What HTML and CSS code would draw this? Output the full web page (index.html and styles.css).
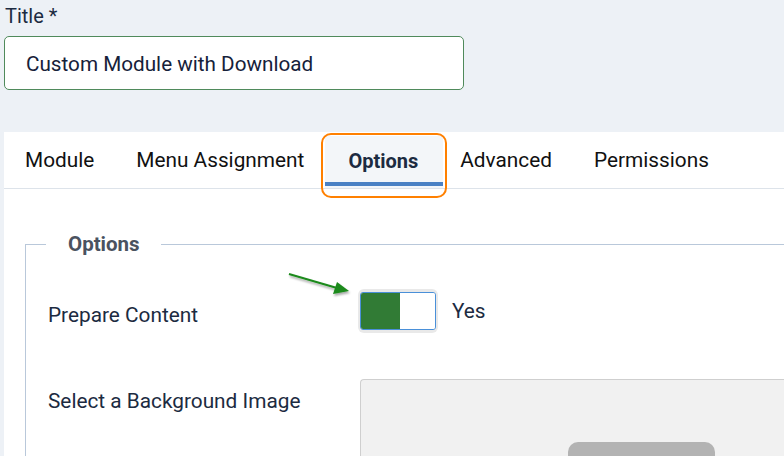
FILE: index.html
```html
<!DOCTYPE html>
<html>
<head>
<meta charset="utf-8">
<link rel="stylesheet" href="styles.css">
</head>
<body>
<div class="page">
  <div class="title-label">Title *</div>
  <div class="title-input">Custom Module with Download</div>
  <div class="panel">
    <div class="tabs">
      <div class="tab">Module</div>
      <div class="tab">Menu Assignment</div>
      <div class="tab active">Options</div>
      <div class="tab">Advanced</div>
      <div class="tab">Permissions</div>
    </div>
    <div class="tab-body">
      <div class="fieldset">
        <div class="legend">Options</div>
        <div class="row row-toggle">
          <div class="label">Prepare Content</div>
          <div class="control">
            <div class="switch-ring">
              <div class="switch"><span class="on"></span><span class="off"></span></div>
            </div>
            <span class="switch-text">Yes</span>
          </div>
        </div>
        <div class="row row-image">
          <div class="label">Select a Background Image</div>
          <div class="control">
            <div class="image-box"><div class="image-btn"></div></div>
          </div>
        </div>
      </div>
    </div>
  </div>
  <svg class="arrow" width="80" height="40" viewBox="0 0 80 40">
    <defs>
      <filter id="sh" x="-20%" y="-50%" width="140%" height="200%">
        <feDropShadow dx="1" dy="2" stdDeviation="1.2" flood-color="#000" flood-opacity="0.35"/>
      </filter>
    </defs>
    <g filter="url(#sh)">
      <line x1="2" y1="4" x2="50" y2="18" stroke="#1c8a1c" stroke-width="2"/>
      <polygon points="62,21 46,24 50,12" fill="#1c8a1c"/>
    </g>
  </svg>
</div>
</body>
</html>
```
FILE: styles.css
```css
html, body {
  margin: 0;
  padding: 0;
  background: #edf1f6;
  font-family: Roboto, "Liberation Sans", sans-serif;
  color: #1c2b41;
  overflow: hidden;
}
.page {
  position: relative;
  width: 784px;
  height: 456px;
  padding-left: 4px;
  box-sizing: border-box;
  overflow: hidden;
}
.title-label {
  font-size: 20px;
  line-height: 24px;
  padding: 4px 0 0 1px;
  height: 36px;
  box-sizing: border-box;
}
.title-input {
  width: 460px;
  height: 54px;
  box-sizing: border-box;
  border: 1px solid #4f8a5b;
  border-radius: 5px;
  background: #fff;
  font-size: 20.7px;
  line-height: 54px;
  padding-left: 21px;
  color: #16213a;
}
.panel {
  margin-top: 42px;
  background: #fff;
  height: 400px;
}
.tabs {
  display: flex;
  height: 57px;
  border-bottom: 1px solid #dde3ea;
  box-sizing: border-box;
}
.tab {
  flex-shrink: 0;
  padding: 0 21px;
  font-size: 20.8px;
  line-height: 57px;
  color: #111;
}
.tab.active {
  position: relative;
  font-weight: bold;
  font-size: 20px;
  color: #1c2b41;
  background: #f3f6f9;
  margin: 4px -4px 0 0;
  padding: 0 25px 0 23px;
  line-height: 50px;
}
.tab.active::after {
  content: "";
  position: absolute;
  left: 0;
  right: 0;
  top: 46px;
  height: 4px;
  background: #4a81c4;
}
.tab.active::before {
  content: "";
  position: absolute;
  left: -4px;
  right: -4px;
  top: -3px;
  bottom: -10px;
  border: 2px solid #ff8000;
  border-radius: 10px;
}
.tab-body {
  padding: 55px 0 0 21px;
}
.fieldset {
  border: 1px solid #b9c8da;
  border-right: none;
  height: 300px;
  position: relative;
  padding: 0 0 0 22px;
}
.legend {
  position: absolute;
  top: -13px;
  left: 20px;
  background: #fff;
  padding: 0 21px 0 22px;
  font-size: 20.5px;
  font-weight: bold;
  color: #4a5260;
  line-height: 24px;
}
.row {
  display: flex;
}
.label {
  flex-shrink: 0;
  width: 310px;
  font-size: 20.8px;
  color: #1c2b41;
}
.row-toggle {
  margin-top: 44px;
  height: 90px;
}
.row-toggle .label {
  padding-top: 14px;
}
.control {
  display: flex;
  align-items: flex-start;
  flex-shrink: 0;
}
.switch-ring {
  background: #e9e9e9;
  border-radius: 6px;
  padding: 3px 2px;
}
.switch {
  display: flex;
  width: 76px;
  height: 38px;
  border: 1px solid #4a90d9;
  border-radius: 3px;
  overflow: hidden;
  box-sizing: border-box;
}
.switch .on {
  width: 39px;
  background: #317b35;
}
.switch .off {
  flex: 1;
  background: #fff;
}
.switch-text {
  margin-left: 14px;
  font-size: 20.8px;
  line-height: 20px;
  padding-top: 12px;
  color: #1c2b41;
}
.row-image .label {
  padding-top: 10px;
}
.image-box {
  margin-left: 2px;
  width: 430px;
  height: 120px;
  background: #f1f1f1;
  border: 1px solid #cfcfcf;
  border-right: none;
  border-radius: 4px 0 0 0;
  box-sizing: border-box;
  padding: 62px 0 0 207px;
}
.image-btn {
  width: 147px;
  height: 40px;
  background: #b3b3b3;
  border-radius: 10px;
}
.arrow {
  position: absolute;
  left: 287px;
  top: 270px;
}
```
